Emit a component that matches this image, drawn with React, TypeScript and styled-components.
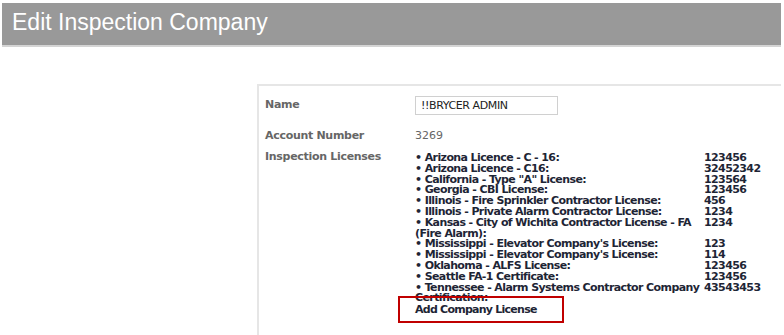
import React from "react";
import styled, { createGlobalStyle } from "styled-components";

const Global = createGlobalStyle`
  html, body { margin: 0; padding: 0; background: #fff; }
  body { font-family: "DejaVu Sans", Verdana, sans-serif; }
`;

const Page = styled.div`
  width: 784px;
  height: 335px;
  overflow: hidden;
  padding: 3px 3px 0 2px;
  box-sizing: border-box;
`;

const Header = styled.div`
  background: #999999;
  height: 36px;
  border-bottom: 2px solid #d4d4d4;
  display: flex;
  align-items: flex-start;
  padding: 6px 10px 0;
  box-sizing: content-box;
`;

const Title = styled.h1`
  margin: 0;
  font-family: "Liberation Sans", Arial, sans-serif;
  font-weight: normal;
  font-size: 23px;
  line-height: 26px;
  color: #fff;
`;

const Panel = styled.div`
  margin: 37px 0 0 255px;
  border-top: 2px solid #e6e6e6;
  border-left: 2px solid #e6e6e6;
  padding: 10px 0 0 6px;
  height: 260px;
`;

const Row = styled.div<{ $gap?: number }>`
  display: grid;
  grid-template-columns: 150px 1fr;
  margin-bottom: ${(p) => p.$gap ?? 0}px;
`;

const Label = styled.div<{ $pt?: number }>`
  font-weight: bold;
  font-size: 11px;
  color: #666;
  padding-top: ${(p) => p.$pt ?? 0}px;
  line-height: 13px;
  letter-spacing: -0.3px;
`;

const Input = styled.div`
  width: 136px;
  height: 17px;
  border: 1px solid #d0d0d0;
  font-size: 11px;
  line-height: 17px;
  color: #222;
  padding-left: 5px;
  box-sizing: content-box;
  letter-spacing: -0.4px;
`;

const Plain = styled.div`
  font-size: 11px;
  color: #666;
  line-height: 13px;
`;

const Licenses = styled.div`
  display: grid;
  grid-template-columns: 289px 80px;
  font-weight: bold;
  font-size: 11px;
  line-height: 10.8px;
  color: #1e2535;
  padding-top: 3px;
  letter-spacing: -0.6px;
`;

const Cell = styled.div``;

const AddLink = styled.div`
  position: relative;
  font-weight: bold;
  font-size: 11px;
  line-height: 10.8px;
  color: #1e2535;
  margin-top: 1px;
  letter-spacing: -0.75px;
`;

const Highlight = styled.div`
  position: absolute;
  left: -17px;
  top: -9px;
  width: 162px;
  height: 23px;
  border: 2px solid #c00000;
`;

const licenses: [string, string][] = [
  ["Arizona Licence - C - 16:", "123456"],
  ["Arizona Licence - C16:", "32452342"],
  ['California - Type "A" License:', "123564"],
  ["Georgia - CBI License:", "123456"],
  ["Illinois - Fire Sprinkler Contractor License:", "456"],
  ["Illinois - Private Alarm Contractor License:", "1234"],
  ["Kansas - City of Wichita Contractor License - FA (Fire Alarm):", "1234"],
  ["Mississippi - Elevator Company's License:", "123"],
  ["Mississippi - Elevator Company's License:", "114"],
  ["Oklahoma - ALFS License:", "123456"],
  ["Seattle FA-1 Certificate:", "123456"],
  ["Tennessee - Alarm Systems Contractor Company Certification:", "43543453"],
];

export default function App() {
  return (
    <Page>
      <Global />
      <Header>
        <Title>Edit Inspection Company</Title>
      </Header>
      <Panel>
        <Row $gap={14}>
          <Label $pt={2}>Name</Label>
          <Input>!!BRYCER ADMIN</Input>
        </Row>
        <Row $gap={8}>
          <Label>Account Number</Label>
          <Plain>3269</Plain>
        </Row>
        <Row>
          <Label>Inspection Licenses</Label>
          <div>
            <Licenses>
              {licenses.map(([n, v], i) => (
                <React.Fragment key={i}>
                  <Cell>• {n}</Cell>
                  <Cell>{v}</Cell>
                </React.Fragment>
              ))}
            </Licenses>
            <AddLink>
              Add Company License
              <Highlight />
            </AddLink>
          </div>
        </Row>
      </Panel>
    </Page>
  );
}
